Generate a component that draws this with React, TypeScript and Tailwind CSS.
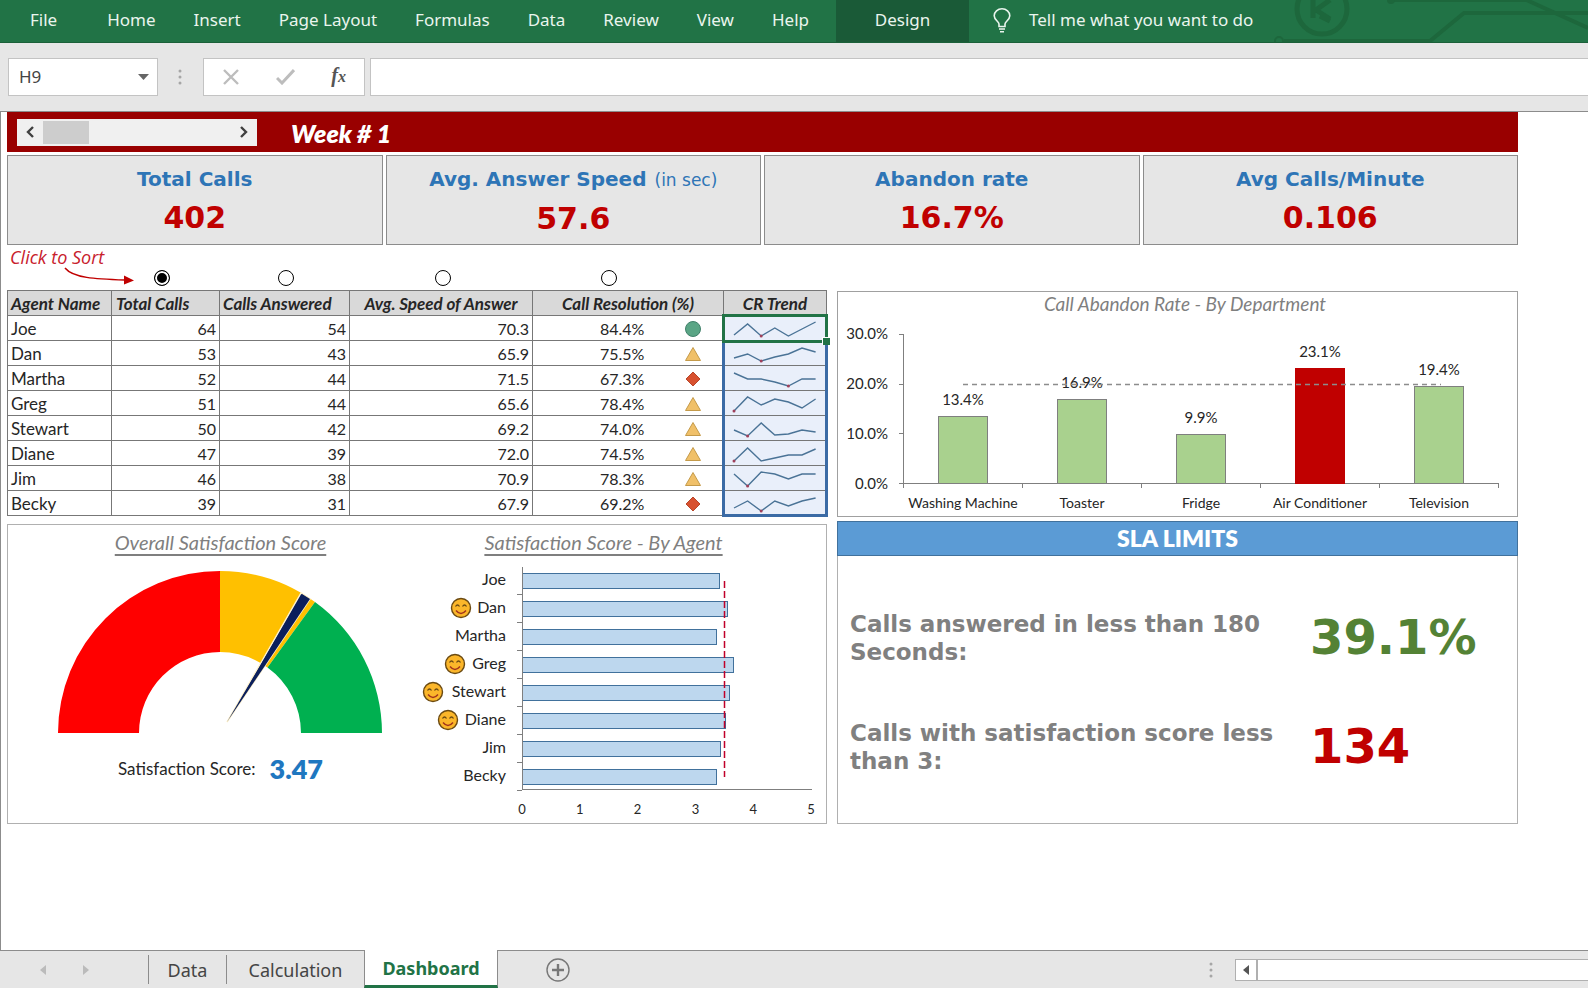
import React, { useState } from 'react';

type Status = 'good' | 'warn' | 'bad';

interface Agent {
  name: string;
  calls: number;
  answered: number;
  speed: string;
  resolution: string;
  status: Status;
  trend: number[];
  score: number;
  happy: boolean;
}

const MENU = ['Home', 'Insert', 'Page Layout', 'Formulas', 'Data', 'Review', 'View', 'Help'];

const AGENTS: Agent[] = [
  { name: 'Joe', calls: 64, answered: 54, speed: '70.3', resolution: '84.4%', status: 'good', trend: [18, 7, 19, 11, 19, 12, 5], score: 3.4, happy: false },
  { name: 'Dan', calls: 53, answered: 43, speed: '65.9', resolution: '75.5%', status: 'warn', trend: [16, 12, 19, 15, 12, 6, 10], score: 3.55, happy: true },
  { name: 'Martha', calls: 52, answered: 44, speed: '71.5', resolution: '67.3%', status: 'bad', trend: [6, 12, 12, 15, 19, 12, 12], score: 3.35, happy: false },
  { name: 'Greg', calls: 51, answered: 44, speed: '65.6', resolution: '78.4%', status: 'warn', trend: [19, 5, 13, 7, 10, 16, 7], score: 3.65, happy: true },
  { name: 'Stewart', calls: 50, answered: 42, speed: '69.2', resolution: '74.0%', status: 'warn', trend: [13, 19, 6, 18, 17, 13, 15], score: 3.58, happy: true },
  { name: 'Diane', calls: 47, answered: 39, speed: '72.0', resolution: '74.5%', status: 'warn', trend: [19, 6, 19, 16, 13, 13, 7], score: 3.52, happy: true },
  { name: 'Jim', calls: 46, answered: 38, speed: '70.9', resolution: '78.3%', status: 'warn', trend: [7, 19, 5, 7, 12, 7, 7], score: 3.43, happy: false },
  { name: 'Becky', calls: 39, answered: 31, speed: '67.9', resolution: '69.2%', status: 'bad', trend: [16, 9, 19, 9, 14, 9, 6], score: 3.35, happy: false },
];

const DEPARTMENTS = [
  { name: 'Washing Machine', rate: 13.4 },
  { name: 'Toaster', rate: 16.9 },
  { name: 'Fridge', rate: 9.9 },
  { name: 'Air Conditioner', rate: 23.1 },
  { name: 'Television', rate: 19.4 },
];

const KPIS = [
  { title: 'Total Calls', note: '', value: '402' },
  { title: 'Avg. Answer Speed', note: '(in sec)', value: '57.6' },
  { title: 'Abandon rate', note: '', value: '16.7%' },
  { title: 'Avg Calls/Minute', note: '', value: '0.106' },
];

const SORTS = [
  { label: 'Sort by total calls', pad: 'pr-1.5' },
  { label: 'Sort by calls answered', pad: 'pl-1' },
  { label: 'Sort by average speed of answer', pad: 'pl-1' },
  { label: 'Sort by call resolution', pad: 'pr-[38px]' },
];

const Ribbon = () => (
  <header className="relative flex h-[43px] items-stretch overflow-hidden border-b border-[#1b6039] bg-[#217346] text-[17px] text-[#eaf5ee]">
    <svg className="absolute right-0 top-0 h-[42px] w-[320px]" viewBox="0 0 320 42" fill="none" stroke="#1d673c" strokeWidth="4" aria-hidden="true">
      <circle cx="54" cy="9" r="25" strokeWidth="5" />
      <path d="M45 0v18M62 0L48 10l14 9M52 16l10 5" strokeWidth="5" />
      <circle cx="11" cy="41" r="4" strokeWidth="2" />
      <path d="M16 41h146l34-28h124M126 0h132M254 -2l66 30" />
      <circle cx="123" cy="0" r="4" fill="#1d673c" stroke="none" />
    </svg>
    <nav className="flex items-stretch" aria-label="Ribbon">
      <button className="pb-0.5 pl-[30px] pr-[31px]">File</button>
      {MENU.map((item) => (
        <button key={item} className="px-[19px] pb-0.5">{item}</button>
      ))}
      <button className="ml-2 w-[133px] bg-[#1a5a37] pb-0.5">Design</button>
    </nav>
    <button className="relative flex items-center gap-[18px] pb-0.5 pl-6">
      <svg className="h-[25px] w-[18px]" viewBox="0 0 18 25" fill="none" stroke="currentColor" strokeWidth="1.6" aria-hidden="true">
        <path d="M6 18.500v-2.500C6 13.500 1.200 12 1.200 7.800A7.800 7 0 0 1 16.800 7.800C16.800 12 12 13.500 12 16v2.500zM6 21h6M7 23.700h4" />
      </svg>
      Tell me what you want to do
    </button>
  </header>
);

const FormulaBar = () => (
  <div className="flex h-[69px] items-center border-b border-[#8c8c8c] bg-[#e6e6e6] pl-2 text-[#444]">
    <div className="flex h-[38px] w-[150px] items-center justify-between border border-[#c3c3c3] bg-white pl-2.5 pr-2">
      <input aria-label="Name box" defaultValue="H9" className="w-20 bg-transparent text-[17px] outline-none" />
      <svg className="h-[6px] w-[11px]" viewBox="0 0 11 6" fill="#666" aria-hidden="true"><path d="M0 0h11L5.500 6z" /></svg>
    </div>
    <Dots className="ml-5" />
    <div className="ml-[21px] flex h-[38px] w-[162px] items-center justify-between border border-[#c3c3c3] bg-white px-[18px]">
      <button aria-label="Cancel">
        <svg className="h-4 w-[18px]" viewBox="0 0 18 16" stroke="#bdbdbd" strokeWidth="2.400" aria-hidden="true"><path d="M2 1l14 14M16 1L2 15" /></svg>
      </button>
      <button aria-label="Enter">
        <svg className="h-4 w-[19px]" viewBox="0 0 19 16" fill="none" stroke="#bdbdbd" strokeWidth="3" aria-hidden="true"><path d="M1 9l5 5L18 1" /></svg>
      </button>
      <button className="font-['Liberation_Serif',serif] text-xl font-bold italic leading-none text-[#555]" aria-label="Insert function">
        f<span className="text-base">x</span>
      </button>
    </div>
    <input aria-label="Formula bar" className="ml-[5px] h-[38px] min-w-0 flex-1 border border-r-0 border-[#c3c3c3] bg-white px-2 outline-none" />
  </div>
);

const Dots = ({ className }: { className: string }) => (
  <svg className={`h-4 w-1 ${className}`} viewBox="0 0 4 16" fill="#a6a6a6" aria-hidden="true">
    <circle cx="2" cy="2" r="1.500" />
    <circle cx="2" cy="8" r="1.500" />
    <circle cx="2" cy="14" r="1.500" />
  </svg>
);

const StatusIcon = ({ status }: { status: Status }) => (
  <svg className="h-4 w-4" viewBox="0 0 16 16" role="img" aria-label={status}>
    {status === 'good' && <circle cx="8" cy="8" r="7.500" fill="#5aa585" stroke="#41806a" />}
    {status === 'warn' && <path d="M8 1.500L15.500 14.500H.5z" fill="#f0c069" stroke="#c49a4a" />}
    {status === 'bad' && <path d="M8 1l7 7-7 7-7-7z" fill="#d8512f" stroke="#b8462a" />}
  </svg>
);

const Sparkline = ({ values }: { values: number[] }) => {
  const low = values.indexOf(Math.max(...values));
  const x = (i: number) => 2 + i * 13.6;
  return (
    <svg className="mx-auto block h-[22px] w-[86px]" viewBox="0 1 86 22" fill="none" aria-hidden="true">
      <polyline points={values.map((v, i) => `${x(i)},${v}`).join(' ')} stroke="#4a7396" strokeWidth="1.400" />
      <circle cx={x(low)} cy={values[low]} r="1.500" fill="#a0405a" />
    </svg>
  );
};

const AgentTable = () => (
  <div className="relative">
    <table className="w-full table-fixed border-collapse text-base leading-5 text-[#262626]">
      <colgroup>
        <col className="w-[104px]" />
        <col className="w-[108px]" />
        <col className="w-[130px]" />
        <col className="w-[183px]" />
        <col />
        <col className="w-[103px]" />
      </colgroup>
      <thead>
        <tr className="h-[25px] bg-[#d9d9d9] text-[17px] italic [&>th]:whitespace-nowrap [&>th]:border [&>th]:border-[#777] [&>th]:px-0 [&>th]:pb-0 [&>th]:pt-0.5">
          <th className="text-left"><span className="pl-[3px]">Agent Name</span></th>
          <th className="text-left"><span className="pl-1">Total Calls</span></th>
          <th className="text-left"><span className="pl-[3px]">Calls Answered</span></th>
          <th>Avg. Speed of Answer</th>
          <th>Call Resolution (%)</th>
          <th>CR Trend</th>
        </tr>
      </thead>
      <tbody>
        {AGENTS.map((a) => (
          <tr key={a.name} className="h-[25px] [&>td]:border [&>td]:border-[#777] [&>td]:pb-0 [&>td]:pt-0.5">
            <td className="px-[3px] text-[17px]">{a.name}</td>
            <td className="px-[3px] text-right">{a.calls}</td>
            <td className="px-[3px] text-right">{a.answered}</td>
            <td className="px-[3px] text-right">{a.speed}</td>
            <td className="px-0">
              <div className="flex items-center justify-between pl-[67px] pr-[22px]">
                {a.resolution}
                <StatusIcon status={a.status} />
              </div>
            </td>
            <td className="bg-[#e9effa] px-0"><Sparkline values={a.trend} /></td>
          </tr>
        ))}
      </tbody>
    </table>
    {/* cell selection */}
    <div className="pointer-events-none absolute -bottom-px -right-px top-6 w-[106px] border-[3px] border-[#3b6ba5]">
      <div className="absolute -left-[3px] -right-[3px] -top-[3px] h-[29px] border-[3px] border-[#217346]">
        <span className="absolute -bottom-[5px] -right-[5px] size-2 border-l border-t border-white bg-[#217346]" />
      </div>
    </div>
  </div>
);

const DepartmentChart = () => {
  const base = 191;
  const y = (rate: number) => base - rate * 5;
  const x = (i: number) => 125 + i * 119;
  return (
    <svg className="block h-auto w-full overflow-visible" viewBox="0 0 679 224" fontSize="14" fill="#262626" role="img" aria-label="Call abandon rate by department">
      <text x="347" y="19" textAnchor="middle" fontSize="19" fontStyle="italic" fill="#7f7f7f">Call Abandon Rate - By Department</text>
      <g stroke="#7f7f7f" shapeRendering="crispEdges">
        <path d="M65.500 42v154M61 191.500h600" fill="none" />
        {[42, 92, 141].map((t) => <path key={t} d={`M61 ${t}.5h4`} />)}
        {[184, 303, 422, 541, 660].map((t) => <path key={t} d={`M${t}.5 191v5`} />)}
      </g>
      {[30, 20, 10, 0].map((v) => (
        <text key={v} x="50" y={y(v) + 6} textAnchor="end" fontSize="15">{v.toFixed(1)}%</text>
      ))}
      {DEPARTMENTS.map((d, i) => {
        const over = d.rate > 20;
        return (
          <g key={d.name}>
            <rect x={x(i) - 24.5} y={Math.round(y(d.rate)) + 0.5} width="49" height={base - Math.round(y(d.rate))} fill={over ? '#c00000' : '#a9d18e'} stroke={over ? '#c00000' : '#7f7f7f'} />
            <text x={x(i)} y={y(d.rate) - 11} textAnchor="middle" fontSize="15">{d.rate}%</text>
            <text x={x(i)} y="216" textAnchor="middle">{d.name}</text>
          </g>
        );
      })}
      <path d="M125 92.500h478" stroke="#8c8c8c" strokeWidth="1.300" strokeDasharray="5 4" />
    </svg>
  );
};

const Gauge = () => (
  <svg className="block h-auto w-full" viewBox="0 0 409 175" role="img" aria-label="Overall satisfaction gauge">
    <path d="M50 171A162 162 0 0 1 212 9V90A81 81 0 0 0 131 171z" fill="#ff0000" />
    <path d="M212 9A162 162 0 0 1 307 40L259.500 105.500A81 81 0 0 0 212 90z" fill="#ffc000" />
    <path d="M307 40A162 162 0 0 1 374 171H293A81 81 0 0 0 259.500 105.500z" fill="#00b050" />
    <path d="M293 31L302 37L219 160z" fill="#0b1f5c" stroke="#fff2cc" strokeWidth="1.500" />
    <path d="M294 32L302 37L219 160z" fill="#0b1f5c" />
  </svg>
);

const Smiley = ({ x, y }: { x: number; y: number }) => (
  <g transform={`translate(${x} ${y})`} stroke="#6b4a12" fill="none">
    <circle r="9.500" fill="#fbb62a" strokeWidth="1.400" />
    <path d="M-5.500-1.500q2-3 4 0M1.500-1.500q2-3 4 0" strokeWidth="1.300" />
    <path d="M-5 2.500q5 6 10 0" stroke="#a3331c" strokeWidth="1.400" />
  </g>
);

// centre of each smiley depends on how wide the name beside it is
const SMILEY_X: Record<string, number> = { Dan: 44, Greg: 38, Stewart: 16, Diane: 31 };

const AgentChart = () => {
  const unit = 57.8;
  return (
    <svg className="block h-auto w-full" viewBox="0 0 409 260" fontSize="16" fill="#262626" role="img" aria-label="Satisfaction score by agent">
      {AGENTS.map((a, i) => {
        const top = 11 + i * 28;
        return (
          <g key={a.name}>
            {a.happy && <Smiley x={SMILEY_X[a.name]} y={top + 7} />}
            <text x="89" y={top + 12} textAnchor="end">{a.name}</text>
            <rect x="105.500" y={top + 0.5} width={Math.round(a.score * unit)} height="15" fill="#bdd7ee" stroke="#41719c" />
            <path d={`M100 ${top + 21.5}h5`} stroke="#7f7f7f" />
          </g>
        );
      })}
      <path d="M105.500 5v222M105 227.500h290" stroke="#7f7f7f" />
      <path d="M307.500 19v196" stroke="#c0002a" strokeWidth="1.500" strokeDasharray="7 3" />
      {[0, 1, 2, 3, 4, 5].map((n) => (
        <text key={n} x={105 + n * unit} y="252" textAnchor="middle" fontSize="13">{n}</text>
      ))}
    </svg>
  );
};

const WeekBar = () => {
  const [week, setWeek] = useState(1);
  return (
    <div className="flex h-10 items-center bg-[#990000] pl-2.5 text-white">
      <div className="flex h-[27px] w-60 items-center bg-[#f0f0f0] text-[#404040]">
        <button className="flex w-[26px] justify-center" aria-label="Previous week" onClick={() => setWeek(Math.max(1, week - 1))}>
          <svg className="h-3 w-2" viewBox="0 0 8 12" fill="none" stroke="currentColor" strokeWidth="2.400"><path d="M7 1L2 6l5 5" /></svg>
        </button>
        <input
          type="range"
          min={1}
          max={5}
          value={week}
          aria-label="Week"
          onChange={(e) => setWeek(Number(e.target.value))}
          className="h-[23px] min-w-0 flex-1 appearance-none bg-transparent outline-none [&::-webkit-slider-thumb]:h-[23px] [&::-webkit-slider-thumb]:w-[46px] [&::-webkit-slider-thumb]:appearance-none [&::-webkit-slider-thumb]:bg-[#cdcdcd]"
        />
        <button className="flex w-[26px] justify-center" aria-label="Next week" onClick={() => setWeek(Math.min(5, week + 1))}>
          <svg className="h-3 w-2" viewBox="0 0 8 12" fill="none" stroke="currentColor" strokeWidth="2.400"><path d="M1 1l5 5-5 5" /></svg>
        </button>
      </div>
      <h1 className="pl-[34px] pt-0.5 font-[Lato,sans-serif] text-[25px] font-extrabold italic leading-none">Week # {week}</h1>
    </div>
  );
};

const SheetTabs = () => (
  <footer className="flex h-[38px] items-stretch border-t border-[#8c8c8c] bg-[#e6e6e6] text-lg text-[#444]">
    <div className="flex items-center gap-[37px] pl-10 pr-[59px]">
      <button aria-label="Previous sheet"><svg className="h-2.5 w-1.5" viewBox="0 0 6 10" fill="#bbb"><path d="M6 0v10L0 5z" /></svg></button>
      <button aria-label="Next sheet"><svg className="h-2.5 w-1.5" viewBox="0 0 6 10" fill="#bbb"><path d="M0 0v10l6-5z" /></svg></button>
    </div>
    <button className="my-1 w-[78px] border-l border-[#8c8c8c]">Data</button>
    <button className="my-1 w-[138px] border-l border-[#8c8c8c]">Calculation</button>
    <button className="-mt-px w-[134px] border-x border-b-[3px] border-x-[#8c8c8c] border-b-[#217346] bg-white font-bold text-[#217346]">Dashboard</button>
    <button aria-label="New sheet" className="ml-12">
      <svg className="size-6" viewBox="0 0 24 24" fill="none" stroke="#777" strokeWidth="1.400">
        <circle cx="12" cy="12" r="11" />
        <path d="M12 6v12M6 12h12" strokeWidth="2.400" />
      </svg>
    </button>
    <div className="ml-auto flex items-center">
      <Dots className="mr-[22px]" />
      <div className="flex h-[22px] w-[353px] border border-r-0 border-[#b0b0b0] bg-white">
        <button aria-label="Scroll left" className="flex w-[22px] items-center justify-center border-r-2 border-[#b0b0b0]">
          <svg className="h-2.5 w-1.5" viewBox="0 0 6 10" fill="#555"><path d="M6 0v10L0 5z" /></svg>
        </button>
      </div>
    </div>
  </footer>
);

const App: React.FC = () => {
  const [sort, setSort] = useState(0);

  return (
    <div className="flex min-h-screen flex-col bg-white font-['Noto_Sans',sans-serif]">
      <Ribbon />
      <FormulaBar />
      <main className="flex-1 border-l border-[#8c8c8c] pl-[6px] pr-[70px] font-[Lato,sans-serif]">
        <WeekBar />

        <section className="grid grid-cols-4 gap-[3px] pt-[3px] text-center font-['DejaVu_Sans',sans-serif]">
          {KPIS.map((kpi) => (
            <div key={kpi.title} className="h-[90px] border border-[#8c8c8c] bg-[#e6e6e6] pt-[9px]">
              <h2 className="text-xl font-bold leading-7 text-[#2e75b6]">
                {kpi.title}
                {kpi.note && <span className="pl-2 text-[17px] font-normal">{kpi.note}</span>}
              </h2>
              <p className="pt-[7px] text-3xl font-bold leading-9 text-[#c00000]">{kpi.value}</p>
            </div>
          ))}
        </section>

        <div className="grid grid-cols-[820fr_681fr] gap-x-2.5">
          <div>
            <div className="relative grid h-[45px] grid-cols-[104px_108px_130px_183px_1fr_103px] items-end pb-1">
              <span className="absolute left-[3px] top-0 font-['Open_Sans',cursive] text-lg italic leading-6 text-[#c8202c]">Click to Sort</span>
              <svg className="absolute left-14 top-[22px] h-5 w-[72px]" viewBox="0 0 72 20" fill="none" stroke="#c00000" strokeWidth="1.500" aria-hidden="true">
                <path d="M2 1C10 11 32 12 62 13" />
                <path d="M61 8.500l10 5-10 4z" fill="#c00000" stroke="none" />
              </svg>
              <span />
              {SORTS.map((s, i) => (
                <div key={s.label} className={`flex justify-center ${s.pad}`}>
                  <input
                    type="radio"
                    name="sort"
                    aria-label={s.label}
                    checked={sort === i}
                    onChange={() => setSort(i)}
                    className="size-4 appearance-none rounded-full border-[1.5px] border-black bg-white checked:bg-black checked:shadow-[inset_0_0_0_2px_white]"
                  />
                </div>
              ))}
            </div>
            <AgentTable />
            <section className="mt-2 grid h-[300px] grid-cols-2 border border-[#b0b0b0] text-center">
              <div>
                <h2 className="h-[37px] pl-4 pt-[5px] text-xl italic leading-6 text-[#7f7f7f] underline underline-offset-4">Overall Satisfaction Score</h2>
                <Gauge />
                <p className="flex items-center justify-center gap-3.5 pl-4 pt-4 text-[17px] leading-8 text-[#262626]">
                  Satisfaction Score: <b className="text-[27px] font-extrabold text-[#1f77c0]">3.47</b>
                </p>
              </div>
              <div>
                <h2 className="h-[37px] pr-9 pt-[5px] text-xl italic leading-6 text-[#7f7f7f] underline underline-offset-4">Satisfaction Score - By Agent</h2>
                <AgentChart />
              </div>
            </section>
          </div>

          <div className="pt-[46px]">
            <section className="border border-[#a0a0a0]"><DepartmentChart /></section>
            <h2 className="mt-1 flex h-[35px] items-center justify-center border border-[#41719c] bg-[#5b9bd5] text-[23px] font-extrabold text-white">SLA LIMITS</h2>
            <section className="h-[268px] border border-t-0 border-[#b0b0b0] pl-3 pt-[54px] font-['DejaVu_Sans',sans-serif] font-bold">
              {[
                { text: 'Calls answered in less than 180 Seconds:', value: '39.1%', color: 'text-[#548235]' },
                { text: 'Calls with satisfaction score less than 3:', value: '134', color: 'text-[#c00000]' },
              ].map((row) => (
                <div key={row.value} className="flex h-[109px] items-start">
                  <p className="w-[460px] pr-4 text-[23px] leading-7 text-[#808080]">{row.text}</p>
                  <p className={`text-5xl leading-[54px] ${row.color}`}>{row.value}</p>
                </div>
              ))}
            </section>
          </div>
        </div>
      </main>
      <SheetTabs />
    </div>
  );
};

export default App;
